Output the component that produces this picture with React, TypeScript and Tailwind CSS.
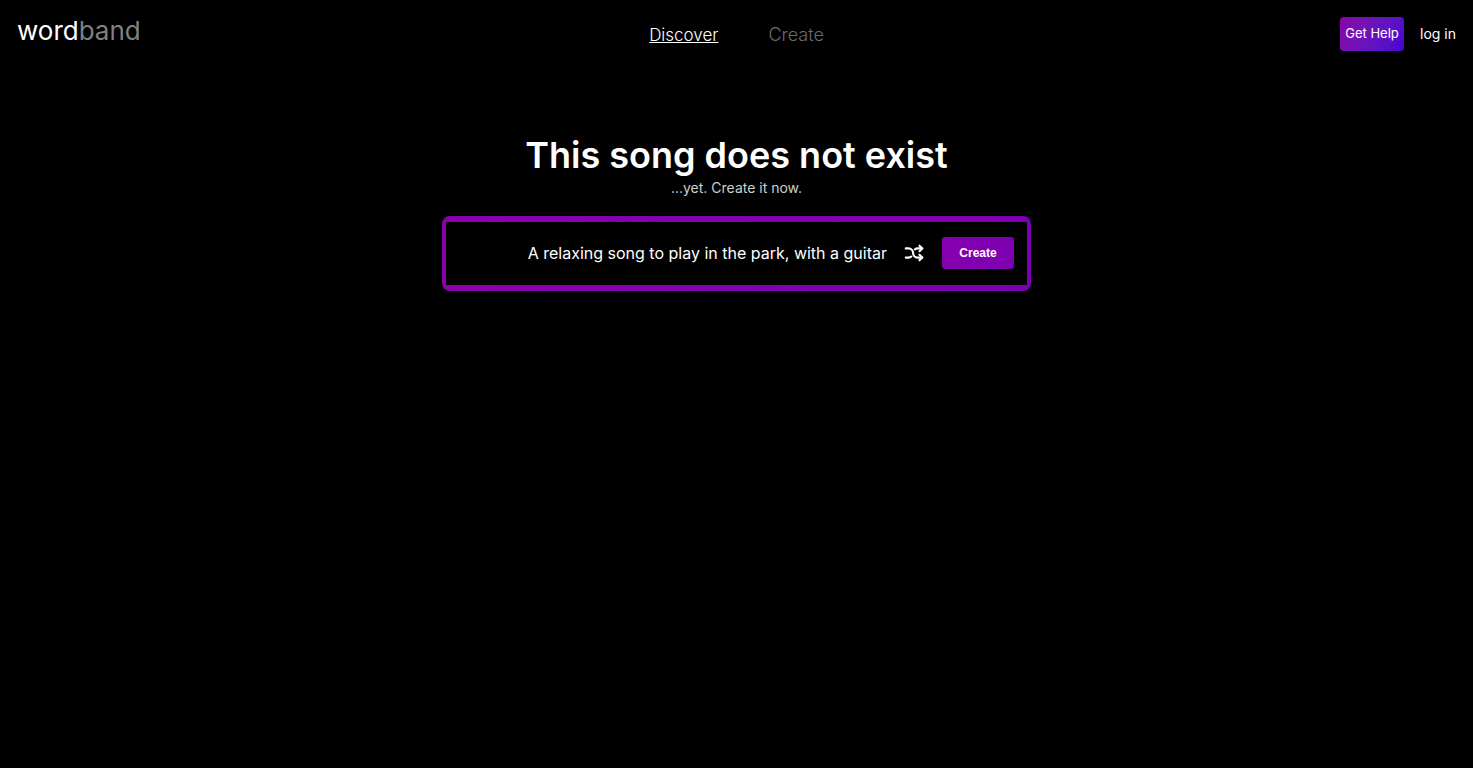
import { useState } from "react";
import { TbArrowsShuffle } from "react-icons/tb";

interface NavItem {
  href: string;
  label: string;
}

const navItems: NavItem[] = [
  { href: "#discover", label: "Discover" },
  { href: "#create", label: "Create" },
];

const prompts = [
  "A relaxing song to play in the park, with a guitar",
  "An upbeat song about a summer road trip",
  "A slow piano ballad about the rain",
];

function Header({ current }: { current: string }) {
  return (
    <header className="grid grid-cols-[1fr_auto_1fr] items-center h-[68px] px-[17px]">
      {/* Brand */}
      <a href="#home" className="pb-[6px] text-[26px] leading-8">
        word<span className="text-[#808080]">band</span>
      </a>

      {/* Navigation */}
      <nav className="flex items-baseline gap-[50px] pt-px leading-6 font-light">
        {navItems.map((item) => (
          <a
            key={item.href}
            href={item.href}
            className={
              item.label === current
                ? "text-[17px] underline"
                : "text-[18px] text-[#6b6b6b]"
            }
          >
            {item.label}
          </a>
        ))}
      </nav>

      {/* Account */}
      <div className="flex items-center gap-4 justify-self-end">
        <button
          type="button"
          className="w-16 h-[34px] rounded text-[13px] whitespace-nowrap bg-linear-120 from-[#8a00a8] to-[#4600d2]"
        >
          Get Help
        </button>
        <a href="#login" className="text-[14px] leading-5">
          log in
        </a>
      </div>
    </header>
  );
}

function PromptForm() {
  const [index, setIndex] = useState(0);
  const [prompt, setPrompt] = useState(prompts[0]);

  function handleShuffle() {
    const next = (index + 1) % prompts.length;
    setIndex(next);
    setPrompt(prompts[next]);
  }

  return (
    <form
      onSubmit={(e) => e.preventDefault()}
      className="w-full max-w-[589px] mt-[18px] px-1 py-[6px] rounded-lg bg-linear-to-r from-[#8a00ac] to-[#7c00b2]"
    >
      <div className="flex items-center h-[63px] pl-4 pr-[13px] pb-px bg-black">
        <input
          type="text"
          aria-label="Song description"
          value={prompt}
          onChange={(e) => setPrompt(e.target.value)}
          className="flex-1 min-w-0 text-[16px] leading-6 text-right bg-transparent outline-none"
        />
        <button
          type="button"
          aria-label="Shuffle"
          onClick={handleShuffle}
          className="ml-4 mr-[17px]"
        >
          <TbArrowsShuffle className="size-[22px]" strokeWidth={2.3} />
        </button>
        <button
          type="submit"
          className="w-[72px] h-8 rounded-[3px] font-['Liberation_Sans',sans-serif] text-[12px] font-bold bg-linear-to-r from-[#8600ae] to-[#7c00b2]"
        >
          Create
        </button>
      </div>
    </form>
  );
}

export default function App() {
  return (
    <div className="min-h-screen bg-black text-white font-[Inter,sans-serif]">
      <Header current="Discover" />
      <main className="flex flex-col items-center px-4 pt-[65px]">
        <h1 className="text-[36px] leading-[45px] font-semibold">
          This song does not exist
        </h1>
        <p className="text-[14px] leading-5 text-[#cfcfcf]">
          ...yet. Create it now.
        </p>
        <PromptForm />
      </main>
    </div>
  );
}
